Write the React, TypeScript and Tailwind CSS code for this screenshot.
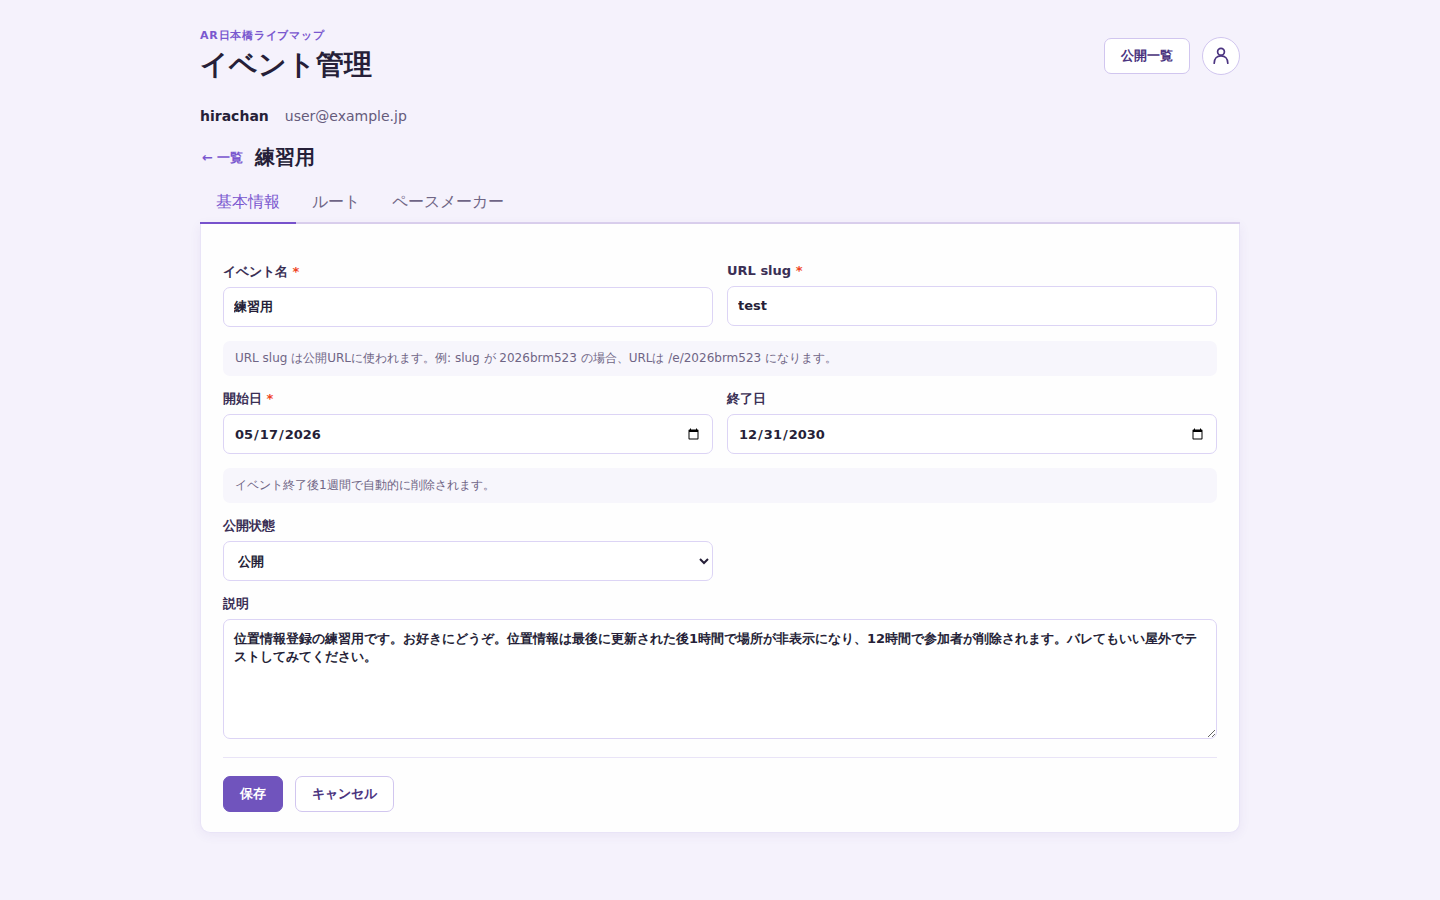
import React from 'react';

const TABS = ['基本情報', 'ルート', 'ペースメーカー'];

const inputClass =
  'block w-full h-10 rounded-[7px] border border-[#dcd4f5] bg-white px-2.5 text-[13px] font-bold text-[#261f38] outline-none';

const outlineButtonClass =
  'h-9 rounded-[7px] border border-[#d1c6ef] bg-white px-4 text-[13px] font-bold text-[#4b3480]';

interface FieldProps {
  label: string;
  required?: boolean;
  labelClass?: string;
  children: React.ReactNode;
}

const Field: React.FC<FieldProps> = ({ label, required, labelClass = 'h-[18px] leading-[18px]', children }) => (
  <label className="block">
    <span className={`block mb-1.5 text-[13px] font-bold text-[#3a2f55] ${labelClass}`}>
      {label}
      {required && <span className="text-[#ef4423]"> *</span>}
    </span>
    {children}
  </label>
);

const Hint: React.FC<{ children: React.ReactNode }> = ({ children }) => (
  <p className="h-[35px] rounded-[7px] bg-[#f7f6fc] px-3 text-[12px] leading-[35px] text-[#6f6585]">{children}</p>
);

export default function App() {
  return (
    <div className="min-h-screen bg-[#f5f2fc] text-[#261f38] font-['DejaVu_Sans',sans-serif]">
      <div className="w-[1040px] mx-auto pt-7">
        {/* Header */}
        <header className="flex items-center justify-between h-14">
          <div>
            <p className="h-4 text-[11px] leading-4 font-bold tracking-[0.77px] text-[#7a58cf]">AR日本橋ライブマップ</p>
            <h1 className="h-10 text-[28px] leading-[42px] font-bold">イベント管理</h1>
          </div>
          <div className="flex items-center gap-3">
            <button className={outlineButtonClass}>公開一覧</button>
            <button className="flex items-center justify-center w-[38px] h-[38px] rounded-full border border-[#d1c6ef] bg-white text-[#4b3480]">
              <svg width="20" height="20" viewBox="0 0 20 20" fill="none" stroke="currentColor" strokeWidth="1.7" strokeLinecap="round">
                <circle cx="10" cy="5.8" r="3.4" />
                <path d="M3.2 17.2c0-4.4 2.8-7.3 6.8-7.3s6.8 2.9 6.8 7.3" />
              </svg>
            </button>
          </div>
        </header>

        <div className="flex gap-4 mt-[22px] h-5 text-[14px] leading-5">
          <strong>hirachan</strong>
          <span className="text-[#655b7b]">user@example.jp</span>
        </div>

        <div className="flex items-center gap-3 mt-4 h-[30px]">
          <a href="#" className="pt-0.5 pl-0.5 text-[13px] font-bold text-[#7a58cf]">← 一覧</a>
          <h2 className="text-[20px] leading-[30px] font-bold">練習用</h2>
        </div>

        {/* Tabs */}
        <nav className="flex mt-2.5 h-[42px] border-b-2 border-[#dcd1ee]">
          {TABS.map((tab, i) => (
            <button
              key={tab}
              className={`h-[42px] px-4 border-b-2 text-[16px] ${
                i === 0 ? 'border-[#7752cc] text-[#7a58cf]' : 'border-transparent text-[#6f6585]'
              }`}
            >
              {tab}
            </button>
          ))}
        </nav>

        <form className="rounded-b-[10px] border border-t-0 border-[#e9e4f7] bg-[#fefefe] px-[22px] pt-[39px] pb-5 shadow-[0_2px_12px_rgba(80,50,150,0.07)]">
          <div className="grid grid-cols-2 gap-[14px]">
            <Field label="イベント名" required>
              <input className={inputClass} defaultValue="練習用" />
            </Field>
            <Field label="URL slug" required labelClass="h-[17px] leading-[16px]">
              <input className={`${inputClass} pb-0.5`} defaultValue="test" />
            </Field>
            <div className="col-span-2">
              <Hint>URL slug は公開URLに使われます。例: slug が 2026brm523 の場合、URLは /e/2026brm523 になります。</Hint>
            </div>
            <Field label="開始日" required>
              <input type="date" className={`${inputClass} pt-px`} defaultValue="2026-05-17" />
            </Field>
            <Field label="終了日">
              <input type="date" className={`${inputClass} pt-px`} defaultValue="2030-12-31" />
            </Field>
            <div className="col-span-2">
              <Hint>イベント終了後1週間で自動的に削除されます。</Hint>
            </div>
            <Field label="公開状態">
              <select className={inputClass} defaultValue="public">
                <option value="public">公開</option>
                <option value="private">非公開</option>
              </select>
            </Field>
            <div className="col-span-2">
              <Field label="説明">
                <textarea
                  className="block w-full h-[120px] rounded-[7px] border border-[#dcd4f5] bg-white px-2.5 py-2.5 text-[13px] leading-[18.2px] font-bold text-[#261f38] outline-none resize-y"
                  defaultValue="位置情報登録の練習用です。お好きにどうぞ。位置情報は最後に更新された後1時間で場所が非表示になり、12時間で参加者が削除されます。バレてもいい屋外でテストしてみてください。"
                />
              </Field>
            </div>
          </div>

          <div className="flex gap-3 mt-[18px] pt-[18px] border-t border-[#e9e4f7]">
            <button type="button" className="h-9 rounded-[7px] border border-[#7054bd] bg-[#7054bd] px-4 text-[13px] font-bold text-white">
              保存
            </button>
            <button type="button" className={outlineButtonClass}>キャンセル</button>
          </div>
        </form>
      </div>
    </div>
  );
}
